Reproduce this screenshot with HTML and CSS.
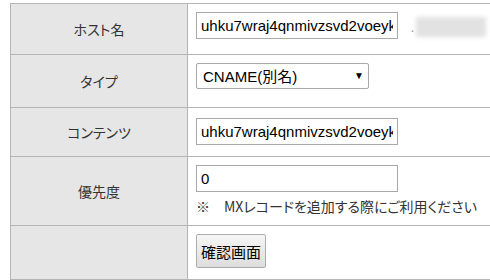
FILE: index.html
```html
<!DOCTYPE html>
<html lang="ja">
<head>
    <meta charset="UTF-8">
    <title>レコード追加</title>
    <link rel="stylesheet" href="styles.css">
</head>
<body>
    <div class="record-form">
        <table class="record-table">
            <colgroup>
                <col class="col-label">
                <col class="col-value">
            </colgroup>
            <tr class="row-host">
                <th>ホスト名</th>
                <td>
                    <input type="text" class="text-input" value="uhku7wraj4qnmivzsvd2voeyk">
                    <span class="domain">.</span><span class="domain-blur"></span>
                </td>
            </tr>
            <tr class="row-type">
                <th>タイプ</th>
                <td>
                    <span class="select-wrap">
                        <select class="type-select">
                            <option>CNAME(別名)</option>
                        </select>
                    </span>
                </td>
            </tr>
            <tr class="row-content">
                <th>コンテンツ</th>
                <td>
                    <input type="text" class="text-input" value="uhku7wraj4qnmivzsvd2voeyk">
                </td>
            </tr>
            <tr class="row-priority">
                <th>優先度</th>
                <td>
                    <input type="text" class="text-input" value="0">
                    <div class="note">※　MXレコードを追加する際にご利用ください</div>
                </td>
            </tr>
            <tr class="row-submit">
                <th></th>
                <td>
                    <button type="button" class="confirm-btn">確認画面</button>
                </td>
            </tr>
        </table>
    </div>
</body>
</html>
```

FILE: styles.css
```css
body {
    margin: 0;
    padding: 0;
    overflow: hidden;
    background: #fff;
    font-family: "Liberation Sans", "Noto Sans CJK JP", sans-serif;
}

.record-form {
    padding: 3px 0 0 10px;
}

.record-table {
    border-collapse: collapse;
    table-layout: fixed;
    width: 481px;
}

.col-label {
    width: 177px;
}

.record-table th,
.record-table td {
    border: 1px solid #b5b5b5;
}

.record-table th {
    background: #e6e6e6;
    color: #333;
    font-weight: normal;
    font-size: 14px;
    font-family: "Noto Sans CJK JP", sans-serif;
    font-feature-settings: "palt";
    text-align: center;
    vertical-align: middle;
    padding: 0;
}

.record-table td {
    vertical-align: top;
    padding: 8px 0 0 8px;
    line-height: 0;
    white-space: nowrap;
}

.row-host td { padding-bottom: 12px; }
.row-type td { padding-bottom: 18px; }
.row-content td { padding-top: 10px; padding-bottom: 11px; }
.row-priority td { padding-bottom: 10px; }
.row-submit td { padding-bottom: 11px; }

.text-input {
    box-sizing: border-box;
    width: 202px;
    height: 27px;
    margin: 0;
    padding: 0 4px;
    border: 1px solid #a9a9a9;
    border-radius: 0;
    font-family: "Liberation Sans", sans-serif;
    font-size: 15px;
    color: #000;
    vertical-align: top;
}

.domain {
    display: inline-block;
    vertical-align: top;
    margin-left: 8px;
    line-height: 30px;
    color: #999;
    font-size: 14px;
}

/* masked domain part */
.domain-blur {
    display: inline-block;
    vertical-align: top;
    width: 70px;
    height: 20px;
    margin: 5px 0 0 2px;
    background: #e2e2e2;
    filter: blur(2px);
}

.select-wrap {
    position: relative;
    display: inline-block;
    vertical-align: top;
}

.select-wrap::after {
    content: "▼";
    position: absolute;
    right: 5px;
    top: 7px;
    font-size: 10px;
    line-height: 12px;
    color: #000;
    pointer-events: none;
}

.type-select {
    -webkit-appearance: none;
    appearance: none;
    box-sizing: border-box;
    width: 173px;
    height: 26px;
    margin: 0;
    padding: 0 6px;
    border: 1px solid #a9a9a9;
    border-radius: 2px;
    background: #fff;
    font-family: "Liberation Sans", "Noto Sans CJK JP", sans-serif;
    font-size: 15px;
    color: #000;
}

.note {
    margin-top: 5px;
    line-height: 18px;
    font-size: 14px;
    color: #333;
    font-family: "Noto Sans CJK JP", sans-serif;
    font-feature-settings: "palt";
}

.confirm-btn {
    box-sizing: border-box;
    width: 70px;
    height: 34px;
    margin: 0;
    padding: 0;
    border: 1px solid #adadad;
    border-radius: 2px;
    background: linear-gradient(#f6f6f6, #dddddd);
    font-family: "Noto Sans CJK JP", sans-serif;
    font-size: 15px;
    color: #000;
    cursor: pointer;
}
```
